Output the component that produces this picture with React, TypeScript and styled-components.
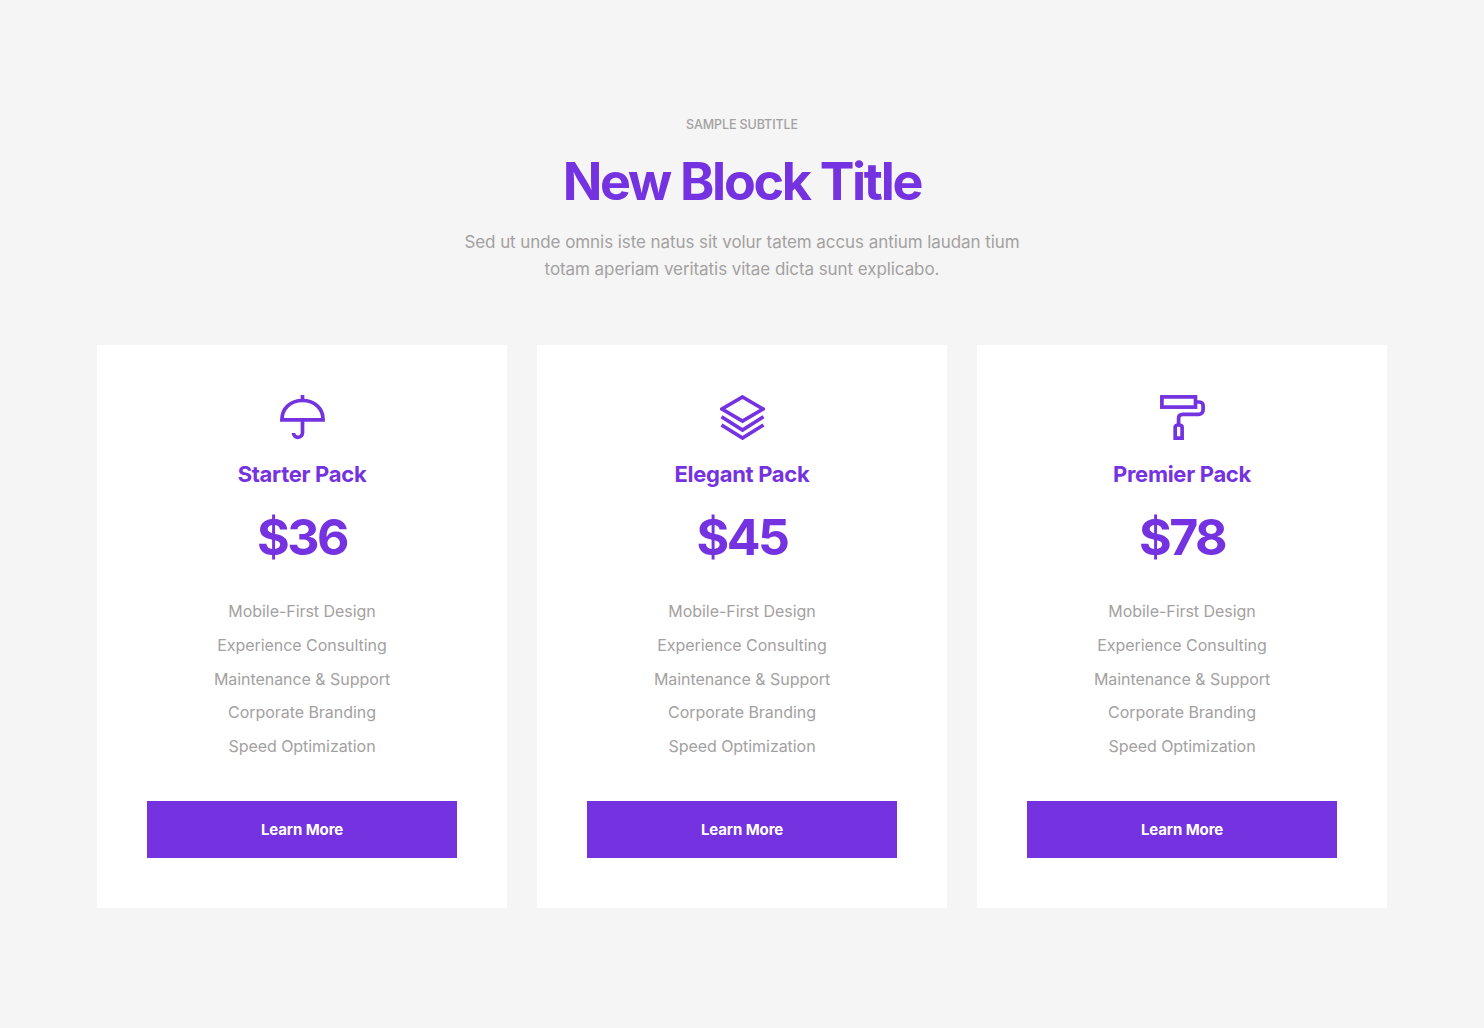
import React from 'react'
import styled, { createGlobalStyle } from 'styled-components'

const GlobalStyle = createGlobalStyle`
  html, body {
    margin: 0;
    padding: 0;
    background: #f5f5f5;
    font-family: Inter, "Open Sans", sans-serif;
  }
`

const Section = styled.section`
  box-sizing: border-box;
  width: 1484px;
  height: 1028px;
  padding: 116px 97px 120px;
  background: #f5f5f5;
`

const Header = styled.header`
  display: flex;
  flex-direction: column;
  align-items: center;
  text-align: center;
  margin-bottom: 62px;
`

const Subtitle = styled.div`
  font-size: 12.5px;
  line-height: 18px;
  font-weight: 500;
  letter-spacing: -0.1px;
  color: #a3a1a1;
  text-transform: uppercase;
`

const Title = styled.h2`
  margin: 18px 0 17px;
  font-size: 52px;
  line-height: 60px;
  font-weight: 700;
  letter-spacing: -2.3px;
  color: #7432e0;
`

const Intro = styled.p`
  margin: 0;
  font-size: 17px;
  line-height: 27px;
  letter-spacing: -0.07px;
  color: #a3a1a1;
`

const CardGrid = styled.div`
  display: grid;
  grid-template-columns: repeat(3, 410px);
  gap: 30px;
`

const Card = styled.article`
  box-sizing: border-box;
  height: 563px;
  padding: 50px;
  background: #fff;
  display: flex;
  flex-direction: column;
  align-items: center;
`

const IconBox = styled.svg`
  display: block;
  width: 45px;
  height: 45px;
  fill: none;
  stroke: #7432e0;
  stroke-width: 3.7;
`

const PackName = styled.h3`
  margin: 21px 0 0;
  font-size: 22px;
  line-height: 26px;
  font-weight: 700;
  letter-spacing: -0.3px;
  color: #7432e0;
`

const Price = styled.div`
  margin-top: 20px;
  font-size: 50px;
  line-height: 60px;
  font-weight: 700;
  letter-spacing: -2.5px;
  color: #7432e0;
`

const Features = styled.ul`
  list-style: none;
  margin: 28px 0 0;
  padding: 0;
  text-align: center;
`

const Feature = styled.li`
  font-size: 16px;
  line-height: 33.75px;
  letter-spacing: -0.05px;
  color: #a3a1a1;
`

const LearnButton = styled.button`
  margin-top: 37px;
  width: 310px;
  height: 57px;
  border: 0;
  padding: 0;
  background: #7432e0;
  color: #fff;
  font-family: inherit;
  font-size: 15px;
  font-weight: 700;
  letter-spacing: -0.1px;
  cursor: pointer;
`

const UmbrellaIcon = () => (
  <IconBox viewBox="0 0 45 45">
    <path d="M22.5 0V5.5" />
    <path d="M1.9 24.8C1.9 13.5 10.5 5.5 22.5 5.5S43.1 13.5 43.1 24.8Z" />
    <path d="M22.5 24.8V37.5C22.5 40.5 20.5 42.3 18 42.3S13.5 40.5 13.5 38" />
  </IconBox>
)

const LayersIcon = () => (
  <IconBox viewBox="0 0 45 45">
    <path d="M22.5 2L43 14L22.5 26L2 14Z" />
    <path d="M1.5 21.7L22.5 35L43.5 21.7" />
    <path d="M1.5 30L22.5 43L43.5 30" />
  </IconBox>
)

const RollerIcon = () => (
  <IconBox viewBox="0 0 45 45">
    <rect x="1.9" y="1.9" width="33.6" height="10.2" />
    <path d="M36 7H39.5C41.7 7 43.1 8.6 43.1 10.8V15C43.1 17.5 41.5 19.3 39 19.3H22.5C20 19.3 18.6 21 18.6 23V30" />
    <path d="M15.2 43.1V32C15.2 30.5 16.5 30 18.6 30S22.1 30.5 22.1 32V43.1Z" />
  </IconBox>
)

const features = [
  'Mobile-First Design',
  'Experience Consulting',
  'Maintenance & Support',
  'Corporate Branding',
  'Speed Optimization',
]

const packs = [
  { name: 'Starter Pack', price: '$36', icon: <UmbrellaIcon /> },
  { name: 'Elegant Pack', price: '$45', icon: <LayersIcon /> },
  { name: 'Premier Pack', price: '$78', icon: <RollerIcon /> },
]

const App = (): JSX.Element => (
  <>
    <GlobalStyle />
    <Section>
      <Header>
        <Subtitle>Sample Subtitle</Subtitle>
        <Title>New Block Title</Title>
        <Intro>
          Sed ut unde omnis iste natus sit volur tatem accus antium laudan tium
          <br />
          totam aperiam veritatis vitae dicta sunt explicabo.
        </Intro>
      </Header>
      <CardGrid>
        {packs.map((pack) => (
          <Card key={pack.name}>
            {pack.icon}
            <PackName>{pack.name}</PackName>
            <Price>{pack.price}</Price>
            <Features>
              {features.map((feature) => (
                <Feature key={feature}>{feature}</Feature>
              ))}
            </Features>
            <LearnButton>Learn More</LearnButton>
          </Card>
        ))}
      </CardGrid>
    </Section>
  </>
)

export default App
